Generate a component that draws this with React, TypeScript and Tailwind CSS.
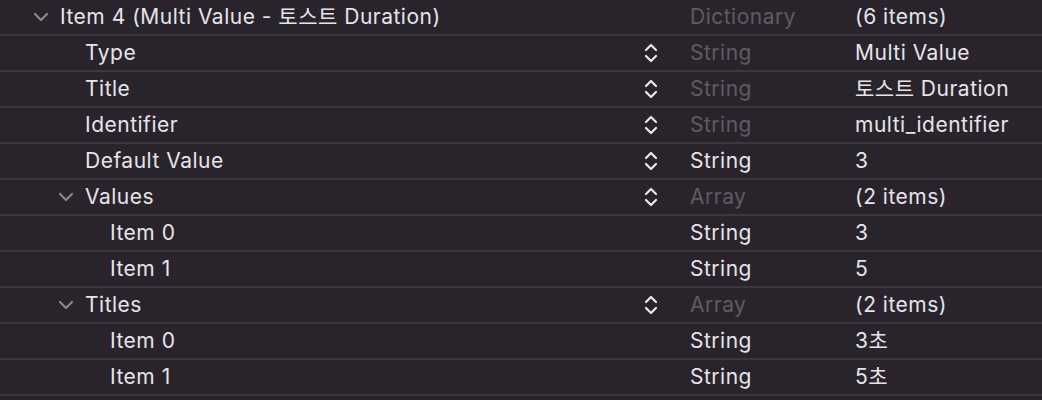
import React from "react";

type Row = {
  level: number;
  key: string;
  expandable?: boolean;
  stepper?: boolean;
  type: string;
  typeDim?: boolean;
  value: string;
};

const rows: Row[] = [
  { level: 0, key: "Item 4 (Multi Value - 토스트 Duration)", expandable: true, type: "Dictionary", typeDim: true, value: "(6 items)" },
  { level: 1, key: "Type", stepper: true, type: "String", typeDim: true, value: "Multi Value" },
  { level: 1, key: "Title", stepper: true, type: "String", typeDim: true, value: "토스트 Duration" },
  { level: 1, key: "Identifier", stepper: true, type: "String", typeDim: true, value: "multi_identifier" },
  { level: 1, key: "Default Value", stepper: true, type: "String", value: "3" },
  { level: 1, key: "Values", expandable: true, stepper: true, type: "Array", typeDim: true, value: "(2 items)" },
  { level: 2, key: "Item 0", type: "String", value: "3" },
  { level: 2, key: "Item 1", type: "String", value: "5" },
  { level: 1, key: "Titles", expandable: true, stepper: true, type: "Array", typeDim: true, value: "(2 items)" },
  { level: 2, key: "Item 0", type: "String", value: "3초" },
  { level: 2, key: "Item 1", type: "String", value: "5초" },
];

const Chevron = () => (
  <svg width="16" height="10" viewBox="0 0 16 10" className="shrink-0">
    <path d="M2 2 L8 8 L14 2" fill="none" stroke="#8a8690" strokeWidth="2.2" strokeLinecap="round" strokeLinejoin="round" />
  </svg>
);

const Stepper = () => (
  <svg width="14" height="22" viewBox="0 0 14 22">
    <path d="M2 8 L7 3 L12 8" fill="none" stroke="#ebe9ed" strokeWidth="2.2" strokeLinecap="round" strokeLinejoin="round" />
    <path d="M2 14 L7 19 L12 14" fill="none" stroke="#ebe9ed" strokeWidth="2.2" strokeLinecap="round" strokeLinejoin="round" />
  </svg>
);

const indent = ["pl-[33px]", "pl-[58px]", "pl-[110px]"];

export default function App() {
  return (
    <div
      className="w-[1042px] h-[400px] overflow-hidden bg-[#29242c] text-[#e6e4e8] text-[21px] tracking-[0.5px]"
      style={{ fontFamily: "Inter, 'Noto Sans CJK KR', sans-serif" }}
    >
      {rows.map((r, i) => (
        <div key={i} className="flex items-center h-[36px] border-b-2 border-[#3b373e]">
          <div className={`flex items-center w-[640px] ${r.expandable ? indent[r.level] : r.level === 1 ? "pl-[85px]" : "pl-[110px]"}`}>
            {r.expandable && (
              <span className="w-[27px] flex">
                <Chevron />
              </span>
            )}
            <span className="whitespace-nowrap">{r.key}</span>
          </div>
          <div className="w-[50px] flex items-center pl-[4px]">
            {r.stepper && <Stepper />}
          </div>
          <div className={`w-[165px] ${r.typeDim ? "text-[#5f5b63]" : ""}`}>{r.type}</div>
          <div className="whitespace-nowrap">{r.value}</div>
        </div>
      ))}
    </div>
  );
}
